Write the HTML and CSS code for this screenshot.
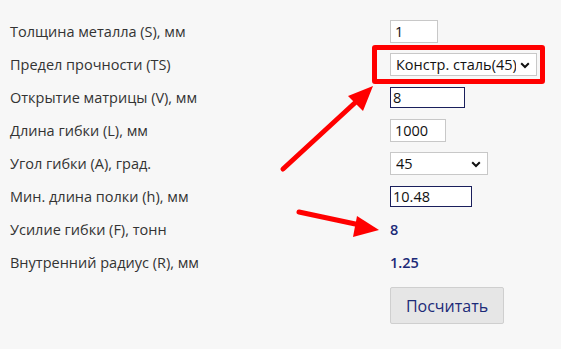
FILE: index.html
```html
<!DOCTYPE html>
<html>
<head>
    <title>Калькулятор гибки</title>
    <link rel="stylesheet" href="styles.css">
</head>
<body>
    <div class="calc">
        <div class="row">
            <label class="label">Толщина металла (S), мм</label>
            <input type="text" class="field w-s" value="1">
        </div>
        <div class="row">
            <label class="label">Предел прочности (TS)</label>
            <span class="select-wrap highlight">
                <select class="field select w-steel">
                    <option>Констр. сталь(45)</option>
                </select>
                <svg class="chevron" width="10" height="7" viewBox="0 0 10 7"><path d="M1.2 1.3 L5 5 L8.8 1.3" fill="none" stroke="#111" stroke-width="2"/></svg>
            </span>
        </div>
        <div class="row">
            <label class="label">Открытие матрицы (V), мм</label>
            <input type="text" class="field active w-v" value="8">
        </div>
        <div class="row">
            <label class="label">Длина гибки (L), мм</label>
            <input type="text" class="field w-l" value="1000">
        </div>
        <div class="row">
            <label class="label">Угол гибки (A), град.</label>
            <span class="select-wrap">
                <select class="field select w-angle">
                    <option>45</option>
                </select>
                <svg class="chevron" width="10" height="7" viewBox="0 0 10 7"><path d="M1.2 1.3 L5 5 L8.8 1.3" fill="none" stroke="#111" stroke-width="2"/></svg>
            </span>
        </div>
        <div class="row">
            <label class="label">Мин. длина полки (h), мм</label>
            <input type="text" class="field active w-h" value="10.48">
        </div>
        <div class="row">
            <span class="label">Усилие гибки (F), тонн</span>
            <span class="result">8</span>
        </div>
        <div class="row">
            <span class="label">Внутренний радиус (R), мм</span>
            <span class="result">1.25</span>
        </div>
        <div class="actions">
            <button class="calc-button">Посчитать</button>
        </div>
    </div>

    <!-- annotation arrows -->
    <svg class="notes" width="561" height="349" viewBox="0 0 561 349">
        <line x1="283" y1="169" x2="358" y2="100" stroke="#ff0000" stroke-width="5" stroke-linecap="round"/>
        <polygon points="373,86 363,111 348,96" fill="#ff0000"/>
        <line x1="299" y1="212" x2="360" y2="225" stroke="#ff0000" stroke-width="5" stroke-linecap="round"/>
        <polygon points="379,230 353,237 357,216" fill="#ff0000"/>
    </svg>
</body>
</html>
```

FILE: styles.css
```css
:root {
    --label-color: #333333;
    --navy: #1c2a78;
    --page-bg: #f7f7f7;
    --border-light: #c8c8c8;
}

body {
    margin: 0;
    background: var(--page-bg);
    font-family: 'Open Sans', 'DejaVu Sans', sans-serif;
    font-size: 14.5px;
    color: var(--label-color);
    position: relative;
    width: 561px;
    height: 349px;
    overflow: hidden;
}

.calc {
    padding: 15px 0 0 10px;
}

.row {
    display: grid;
    grid-template-columns: 380px auto;
    align-items: center;
    height: 33px;
}

.label {
    line-height: 20px;
}

.field {
    box-sizing: border-box;
    height: 23px;
    margin: 0;
    padding: 0 4px;
    border: 1px solid var(--border-light);
    background: #ffffff;
    font-family: 'Open Sans', sans-serif;
    font-size: 14.5px;
    color: #111111;
    outline: none;
    border-radius: 0;
}

.field.active {
    height: 21px;
    border-color: #1a1f5c;
    padding: 0 2px;
}

.w-s { width: 48px; }
.w-v { width: 75px; }
.w-l { width: 56px; }
.w-h { width: 82px; }
.w-steel { width: 147px; }
.w-angle { width: 98px; }

.select-wrap {
    position: relative;
    display: inline-block;
    justify-self: start;
    line-height: 0;
}

.select {
    -webkit-appearance: none;
    appearance: none;
    padding: 0 20px 0 5px;
}

.chevron {
    position: absolute;
    right: 7px;
    top: 9px;
    pointer-events: none;
}

.highlight::before {
    content: '';
    position: absolute;
    left: -18px;
    top: -8px;
    right: -8px;
    bottom: -8px;
    border: 5px solid #ff0000;
    border-radius: 3px;
}

input.field, select.field {
    justify-self: start;
}

.result {
    color: var(--navy);
    font-weight: 600;
    line-height: 20px;
}

.actions {
    padding: 8px 0 0 380px;
}

.calc-button {
    width: 114px;
    height: 37px;
    border: 1px solid #cfcfcf;
    border-radius: 2px;
    background: #e6e6e6;
    color: var(--navy);
    font-family: 'Open Sans', sans-serif;
    font-size: 16px;
    cursor: pointer;
}

.notes {
    position: absolute;
    left: 0;
    top: 0;
    pointer-events: none;
}
```
